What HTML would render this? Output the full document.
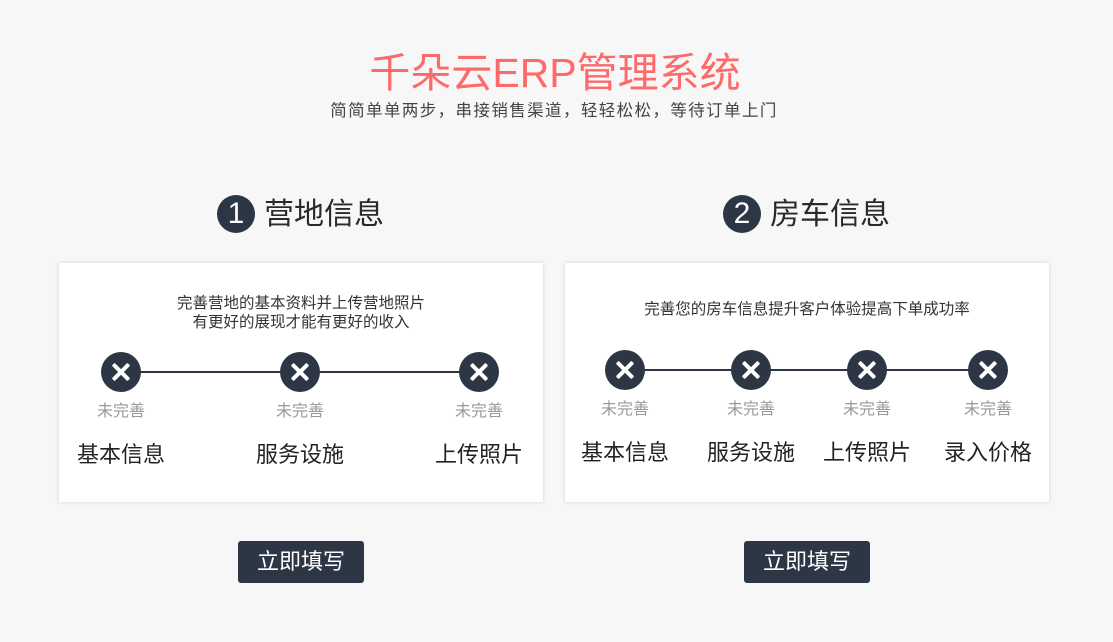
<!DOCTYPE html><html><head><meta charset="utf-8"><style>
*{margin:0;padding:0;box-sizing:border-box}
body{width:1113px;height:642px;background:#f7f7f7;position:relative;overflow:hidden;font-family:"Liberation Sans","Noto Sans CJK SC",sans-serif}
.a{position:absolute;white-space:nowrap}
.c{text-align:center;transform:translateX(-50%)}
.card{position:absolute;top:263px;height:239px;background:#fff;box-shadow:0 0 4px rgba(0,0,0,.15)}
.num{position:absolute;width:38px;height:38px;border-radius:50%;background:#2c3645;color:#fff;font-size:30px;line-height:38px;text-align:center}
.h{font-size:30px;color:#2a2a2a;line-height:38px}
.dot{position:absolute;width:40px;height:40px;border-radius:50%;background:#2c3645;transform:translate(-50%,-50%)}
.dot:before,.dot:after{content:"";position:absolute;left:9px;top:18px;width:22px;height:4px;background:#fff;border-radius:1px;transform:rotate(45deg)}
.dot:after{transform:rotate(-45deg)}
.line{position:absolute;height:2px;background:#2c3645}
.g{font-size:16px;color:#999}
.l{font-size:22px;color:#222}
.t{font-size:15.5px;color:#333;line-height:19px}
.btn{position:absolute;top:541px;width:126px;height:42px;background:#2c3645;border-radius:3px;color:#fff;font-size:22px;line-height:42px;text-align:center}
</style></head><body>
<div class="a c" style="left:555px;top:48px;font-size:41px;color:#fe6a6a;line-height:50px">千朵云ERP管理系统</div>
<div class="a c" style="left:554px;top:100px;font-size:16.5px;letter-spacing:1.4px;color:#444;line-height:22px">简简单单两步，串接销售渠道，轻轻松松，等待订单上门</div>
<div class="num" style="left:217px;top:195px">1</div><div class="a h" style="left:264px;top:196px">营地信息</div>
<div class="num" style="left:723px;top:195px">2</div><div class="a h" style="left:770px;top:196px">房车信息</div>
<div class="card" style="left:59px;width:484px"></div>
<div class="card" style="left:565px;width:484px"></div>
<div class="a c t" style="left:301px;top:294px">完善营地的基本资料并上传营地照片<br>有更好的展现才能有更好的收入</div>
<div class="line" style="left:121px;width:358px;top:371px"></div>
<div class="dot" style="left:121px;top:372px"></div><div class="dot" style="left:300px;top:372px"></div><div class="dot" style="left:479px;top:372px"></div>
<div class="a c g" style="left:121px;top:397px">未完善</div><div class="a c g" style="left:300px;top:397px">未完善</div><div class="a c g" style="left:479px;top:397px">未完善</div>
<div class="a c l" style="left:121px;top:437px">基本信息</div><div class="a c l" style="left:300px;top:437px">服务设施</div><div class="a c l" style="left:479px;top:437px">上传照片</div>
<div class="a c t" style="left:807px;top:300px">完善您的房车信息提升客户体验提高下单成功率</div>
<div class="line" style="left:625px;width:363px;top:369px"></div>
<div class="dot" style="left:625px;top:370px"></div><div class="dot" style="left:751px;top:370px"></div><div class="dot" style="left:867px;top:370px"></div><div class="dot" style="left:988px;top:370px"></div>
<div class="a c g" style="left:625px;top:395px">未完善</div><div class="a c g" style="left:751px;top:395px">未完善</div><div class="a c g" style="left:867px;top:395px">未完善</div><div class="a c g" style="left:988px;top:395px">未完善</div>
<div class="a c l" style="left:625px;top:435px">基本信息</div><div class="a c l" style="left:751px;top:435px">服务设施</div><div class="a c l" style="left:867px;top:435px">上传照片</div><div class="a c l" style="left:988px;top:435px">录入价格</div>
<div class="btn" style="left:238px">立即填写</div>
<div class="btn" style="left:744px">立即填写</div>
</body></html>
